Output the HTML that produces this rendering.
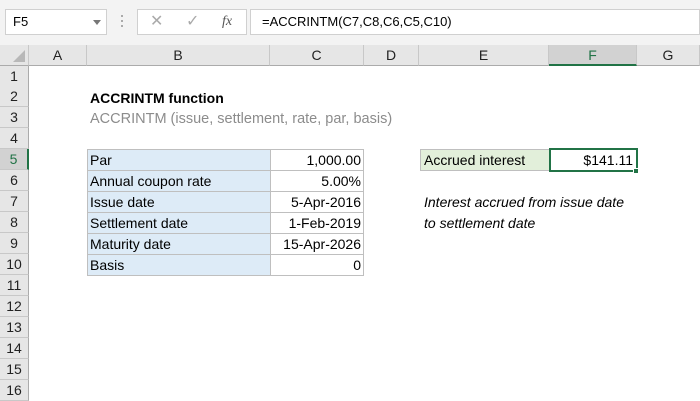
<!DOCTYPE html>
<html><head><style>
*{margin:0;padding:0;box-sizing:border-box}
body{width:700px;height:400px;overflow:hidden;background:#fff;font-family:"Liberation Sans",sans-serif;position:relative;font-size:14px;color:#000}
.a{position:absolute}
.tb{left:0;top:0;width:700px;height:45px;background:#f3f3f3}
.hdr{top:45px;height:21px;background:#e6e6e6;border-bottom:1px solid #ababab;text-align:center;line-height:21px;font-size:14px;color:#222;border-right:1px solid #c8c8c8}
.rh{left:0;width:29px;height:21px;background:#e6e6e6;border-right:1px solid #ababab;border-bottom:1px solid #c8c8c8;text-align:center;line-height:21px;font-size:14px;color:#222}
.c{height:21px;line-height:20px;padding:0 3px;white-space:nowrap}
</style></head><body>
<div class="a tb"></div>
<div class="a" style="left:5px;top:9px;width:102px;height:26px;background:#fff;border:1px solid #d0d0d0;line-height:24px;padding-left:7px;font-size:13px">F5<span class="a" style="left:87px;top:10px;border-left:4px solid transparent;border-right:4px solid transparent;border-top:5px solid #777"></span></div>
<div class="a" style="left:121px;top:15px;width:2px;height:2px;background:#aaa;box-shadow:0 5px #aaa,0 10px #aaa"></div>
<div class="a" style="left:137px;top:9px;width:110px;height:26px;background:#fff;border:1px solid #d0d0d0;color:#aaa;font-size:16px;line-height:24px">
<span class="a" style="left:12px">✕</span><span class="a" style="left:48px">✓</span><span class="a" style="left:84px;color:#555;font-family:'Liberation Serif',serif;font-style:italic;font-size:14px">fx</span></div>
<div class="a" style="left:250px;top:9px;width:450px;height:26px;background:#fff;border:1px solid #d0d0d0;line-height:24px;padding-left:11px;font-size:13px">=ACCRINTM(C7,C8,C6,C5,C10)</div>
<div class="a hdr" style="left:0;width:29px"><span class="a" style="right:3px;bottom:3px;border-left:12px solid transparent;border-bottom:12px solid #b8b8b8"></span></div>
<div class="a hdr" style="left:29px;width:58px">A</div>
<div class="a hdr" style="left:87px;width:183px">B</div>
<div class="a hdr" style="left:270px;width:94px">C</div>
<div class="a hdr" style="left:364px;width:55px">D</div>
<div class="a hdr" style="left:419px;width:130px">E</div>
<div class="a hdr" style="left:549px;width:88px;background:#d2d2d2;border-bottom:2px solid #217346;color:#217346">F</div>
<div class="a hdr" style="left:637px;width:63px">G</div>
<div class="a rh" style="top:66px">1</div><div class="a rh" style="top:86px">2</div><div class="a rh" style="top:107px">3</div><div class="a rh" style="top:128px">4</div>
<div class="a rh" style="top:149px;background:#d2d2d2;color:#217346;border-right:2px solid #217346">5</div>
<div class="a rh" style="top:170px">6</div><div class="a rh" style="top:191px">7</div><div class="a rh" style="top:212px">8</div><div class="a rh" style="top:233px">9</div><div class="a rh" style="top:254px">10</div><div class="a rh" style="top:275px">11</div><div class="a rh" style="top:296px">12</div><div class="a rh" style="top:317px">13</div><div class="a rh" style="top:338px">14</div><div class="a rh" style="top:359px">15</div><div class="a rh" style="top:380px">16</div>
<div class="a c" style="left:87px;top:88px;font-weight:bold">ACCRINTM function</div>
<div class="a c" style="left:87px;top:109px;color:#8c8c8c;font-size:14.5px">ACCRINTM (issue, settlement, rate, par, basis)</div>
<div class="a" style="left:87px;top:149px;width:277px;height:127px;border:1px solid #bfbfbf;background:#fff"></div>
<div class="a" style="left:87px;top:149px;width:184px;height:127px;background:#ddebf7;border:1px solid #bfbfbf"></div>
<div class="a" style="left:87px;top:170px;width:277px;border-top:1px solid #bfbfbf"></div>
<div class="a" style="left:87px;top:191px;width:277px;border-top:1px solid #bfbfbf"></div>
<div class="a" style="left:87px;top:212px;width:277px;border-top:1px solid #bfbfbf"></div>
<div class="a" style="left:87px;top:233px;width:277px;border-top:1px solid #bfbfbf"></div>
<div class="a" style="left:87px;top:254px;width:277px;border-top:1px solid #bfbfbf"></div>
<div class="a c" style="left:87px;top:150px">Par</div><div class="a c" style="left:270px;width:94px;text-align:right;top:150px">1,000.00</div>
<div class="a c" style="left:87px;top:171px">Annual coupon rate</div><div class="a c" style="left:270px;width:94px;text-align:right;top:171px">5.00%</div>
<div class="a c" style="left:87px;top:192px">Issue date</div><div class="a c" style="left:270px;width:94px;text-align:right;top:192px">5-Apr-2016</div>
<div class="a c" style="left:87px;top:213px">Settlement date</div><div class="a c" style="left:270px;width:94px;text-align:right;top:213px">1-Feb-2019</div>
<div class="a c" style="left:87px;top:234px">Maturity date</div><div class="a c" style="left:270px;width:94px;text-align:right;top:234px">15-Apr-2026</div>
<div class="a c" style="left:87px;top:255px">Basis</div><div class="a c" style="left:270px;width:94px;text-align:right;top:255px">0</div>
<div class="a c" style="left:420px;top:149px;width:130px;height:22px;background:#e2efda;border:1px solid #bfbfbf;line-height:20px">Accrued interest</div>
<div class="a c" style="left:549px;top:148px;width:89px;height:24px;border:2px solid #217346;text-align:right;line-height:20px">$141.11</div>
<div class="a" style="left:633px;top:168px;width:6px;height:6px;background:#217346;border:1px solid #fff"></div>
<div class="a c" style="left:421px;top:192px;font-style:italic">Interest accrued from issue date</div>
<div class="a c" style="left:421px;top:213px;font-style:italic">to settlement date</div>
</body></html>
